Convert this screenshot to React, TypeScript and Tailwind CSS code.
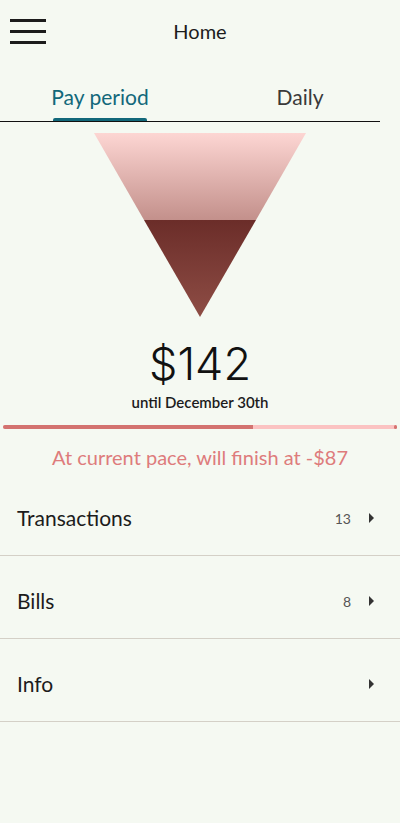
import { useState } from 'react'

const rows = [
	{ label: 'Transactions', count: '13' },
	{ label: 'Bills', count: '8' },
	{ label: 'Info', count: '' },
]

function Funnel() {
	return (
		<svg width="212" height="184" viewBox="0 0 212 184">
			<defs>
				<linearGradient id="top" x1="0" y1="0" x2="0" y2="1">
					<stop offset="0" stopColor="#fdd6d3" />
					<stop offset="1" stopColor="#c3908b" />
				</linearGradient>
				<linearGradient id="bottom" x1="0" y1="0" x2="0" y2="1">
					<stop offset="0" stopColor="#6b2d29" />
					<stop offset="1" stopColor="#8e4d45" />
				</linearGradient>
			</defs>
			<polygon points="0,0 212,0 162,87 50,87" fill="url(#top)" />
			<polygon points="50,87 162,87 106,184" fill="url(#bottom)" />
		</svg>
	)
}

export default function App() {
	const [tab, setTab] = useState(0)

	return (
		<div
			className="min-h-[823px] w-[400px] bg-[#f5f9f2] text-[#1c1c1c]"
			style={{ fontFamily: 'Lato, "Noto Sans", sans-serif' }}
		>
			<header className="relative flex h-[62px] items-center justify-center">
				<button className="absolute left-[10px] top-[19px] flex w-[36px] flex-col gap-[8px]">
					<span className="h-[3px] w-full bg-[#1c1c1c]" />
					<span className="h-[3px] w-full bg-[#1c1c1c]" />
					<span className="h-[3px] w-full bg-[#1c1c1c]" />
				</button>
				<h1 className="text-[20px]">Home</h1>
			</header>

			<nav className="flex">
				{['Pay period', 'Daily'].map((t, i) => (
					<button
						key={t}
						onClick={() => setTab(i)}
						className={`relative flex h-[59px] flex-1 items-end justify-center pb-[9px] text-[21px] ${
							tab === i ? 'text-[#12687a]' : 'text-[#3a3a3a]'
						}`}
					>
						{t}
						{tab === i && (
							<span className="absolute bottom-0 left-1/2 h-[3px] w-[94px] -translate-x-1/2 rounded-t-[2px] bg-[#12687a]" />
						)}
					</button>
				))}
			</nav>
			<div className="mr-[20px] h-px bg-[#111]" />

			<div className="flex flex-col items-center pt-[11px]">
				<Funnel />
				<div
					className="mt-[23px] text-[45px] font-light leading-[48px] text-[#111]"
					style={{ fontFamily: 'Inter, sans-serif' }}
				>
					$142
				</div>
				<div className="mt-[3px] text-[15px] font-semibold">until December 30th</div>
			</div>

			<div className="mx-[3px] mt-[11px] flex h-[4px] rounded-full bg-[#fbc3c2]">
				<div className="h-full w-[250px] rounded-l-full bg-[#d37370]" />
				<div className="ml-auto h-full w-[3px] rounded-full bg-[#d37370]" />
			</div>

			<p className="mt-[13px] text-center text-[20px] text-[#de7c7c]">
				At current pace, will finish at -$87
			</p>

			<ul className="mt-[1px]">
				{rows.map(r => (
					<li
						key={r.label}
						className="flex h-[83px] items-center border-b border-[#d4d0c7] pl-[17px] pr-[26px] pt-[9px]"
					>
						<span className="flex-1 text-[21px]">{r.label}</span>
						<span className="text-[14px] text-[#555]">{r.count}</span>
						<span className="ml-[18px] h-0 w-0 border-y-[5px] border-l-[5px] border-y-transparent border-l-[#333]" />
					</li>
				))}
			</ul>
		</div>
	)
}
